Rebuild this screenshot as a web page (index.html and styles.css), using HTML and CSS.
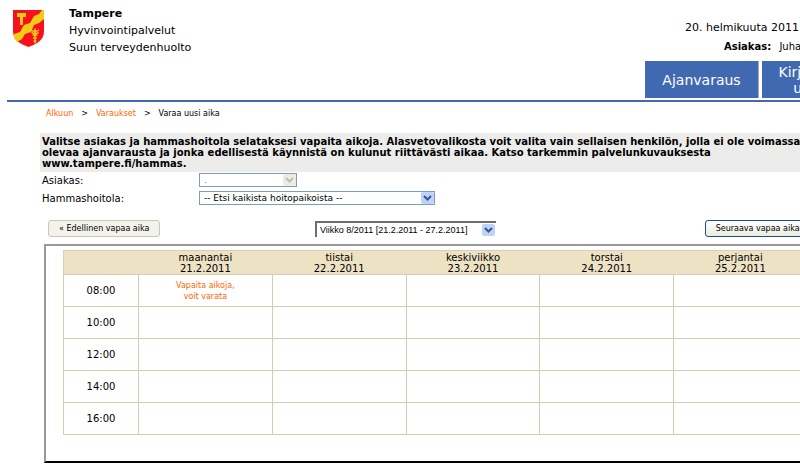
FILE: index.html
```html
<!DOCTYPE html>
<html lang="fi">
<head>
  <meta charset="UTF-8">
  <title>Ajanvaraus - Suun terveydenhuolto</title>
  <link rel="stylesheet" href="styles.css">
</head>
<body>

  <div class="page">
    <header class="header">
      <svg class="logo" viewBox="0 0 31 37" aria-hidden="true">
        <path d="M0 0h31v21c0 9-7 13-15.500 16C7 34 0 30 0 21z" fill="#f8101c"/>
        <path d="M31 0v9l-5 4-5 2-3 7-6 2-3 5-5 3-3-4v-4l6-2 4-7 6-2 4-7 5-2 3-4z" fill="#f0cc18"/>
        <path d="M4 3h9v4h-3v8H7V7H4z" fill="#f0cc18"/>
        <path d="M22 18.500v15M18 20q4 3 8 0M18.500 22.500q3.500 2 7 0M19.500 25h5M20 28h4M20.500 31h3" fill="none" stroke="#f0cc18" stroke-width="1.500"/>
      </svg>
      <div class="org">
        <h1>Tampere</h1>
        <p>Hyvinvointipalvelut</p>
        <p>Suun terveydenhuolto</p>
      </div>
      <div class="session">
        <div class="user">
          <p>20. helmikuuta 2011</p>
          <p class="client"><b>Asiakas:</b> Juha</p>
        </div>
        <nav class="tabs">
          <a href="#">Ajanvaraus</a>
          <a href="#">Kirjaudu<br>ulos</a>
        </nav>
      </div>
    </header>

    <main class="content">
      <nav class="breadcrumb">
        <a href="#">Alkuun</a>
        <span>&gt;</span>
        <a href="#">Varaukset</a>
        <span>&gt;</span>
        <span>Varaa uusi aika</span>
      </nav>

      <p class="info">Valitse asiakas ja hammashoitola selataksesi vapaita aikoja. Alasvetovalikosta voit valita vain sellaisen henkilön, jolla ei ole voimassa olevaa ajanvarausta ja jonka edellisestä käynnistä on kulunut riittävästi aikaa. Katso tarkemmin palvelunkuvauksesta www.tampere.fi/hammas.</p>

      <div class="form">
        <label for="client">Asiakas:</label>
        <div class="select client-select">
          <select id="client" disabled><option>.</option></select>
          <svg class="arrow" viewBox="0 0 13 11" aria-hidden="true"><path d="M3 3.500l3.500 3.500L10 3.500"/></svg>
        </div>
        <label for="clinic">Hammashoitola:</label>
        <div class="select clinic-select">
          <select id="clinic"><option>-- Etsi kaikista hoitopaikoista --</option></select>
          <svg class="arrow" viewBox="0 0 13 11" aria-hidden="true"><path d="M3 3.500l3.500 3.500L10 3.500"/></svg>
        </div>
      </div>

      <div class="pager">
        <button type="button">« Edellinen vapaa aika</button>
        <div class="select week-select">
          <select aria-label="Viikko"><option>Viikko 8/2011 [21.2.2011 - 27.2.2011]</option></select>
          <svg class="arrow" viewBox="0 0 13 11" aria-hidden="true"><path d="M3 3.500l3.500 3.500L10 3.500"/></svg>
        </div>
        <button type="button" class="next">Seuraava vapaa aika »</button>
      </div>

      <div class="calendar">
        <table>
          <thead>
            <tr>
              <th class="time"></th>
              <th>maanantai<br>21.2.2011</th>
              <th>tiistai<br>22.2.2011</th>
              <th>keskiviikko<br>23.2.2011</th>
              <th>torstai<br>24.2.2011</th>
              <th>perjantai<br>25.2.2011</th>
            </tr>
          </thead>
          <tbody>
            <tr><th>08:00</th><td><a href="#">Vapaita aikoja,<br>voit varata</a></td><td></td><td></td><td></td><td></td></tr>
            <tr><th>10:00</th><td></td><td></td><td></td><td></td><td></td></tr>
            <tr><th>12:00</th><td></td><td></td><td></td><td></td><td></td></tr>
            <tr><th>14:00</th><td></td><td></td><td></td><td></td><td></td></tr>
            <tr><th>16:00</th><td></td><td></td><td></td><td></td><td></td></tr>
          </tbody>
        </table>
      </div>
    </main>
  </div>

</body>
</html>
```

FILE: styles.css
```css
* {
  box-sizing: border-box;
  margin: 0;
  padding: 0;
}

body {
  background: #fff;
  color: #000;
  font-family: Verdana, "DejaVu Sans", sans-serif;
  font-size: 10px;
  overflow: hidden;
}

a {
  color: #f60;
  text-decoration: none;
}

.page {
  min-width: 862px;
  padding-left: 7px;
}

/* Header */
.header {
  display: flex;
  align-items: flex-start;
  padding: 5px 8px 2px 6px;
  border-bottom: 2px solid #4169b2;
}

.logo {
  width: 31px;
  height: 37px;
  margin-top: 5px;
}

.org {
  margin-left: 25px;
  font-size: 11px;
  line-height: 17px;
}

.org h1 {
  font-size: 11px;
}

.session {
  margin-left: auto;
}

.user {
  width: 155px;
  margin-left: 40px;
  padding-top: 13px;
  font-size: 11px;
  line-height: 19px;
}

.client {
  margin-left: 39px;
  font-size: 10px;
}

.client b {
  margin-right: 5px;
}

.tabs {
  display: grid;
  grid-template-columns: 114px 92px;
  gap: 3px;
  margin-top: 5px;
}

.tabs a {
  display: flex;
  align-items: center;
  justify-content: center;
  height: 37px;
  border-right: 1px solid #aaa;
  background: #4169b2;
  color: #fff;
  font-size: 14px;
  line-height: 16px;
  text-align: center;
}

/* Content */
.content {
  padding: 7px 34px 0 33px;
}

.breadcrumb {
  display: flex;
  gap: 8px;
  padding-left: 6px;
  font-size: 8px;
  line-height: 10px;
}

.info {
  margin-top: 14px;
  padding: 3px 2px;
  background: #ececea;
  font-weight: bold;
  line-height: 11px;
}

.form {
  display: grid;
  grid-template-columns: 155px auto;
  justify-content: start;
  align-items: center;
  gap: 4px 2px;
  padding: 1px 0 0 2px;
}

/* Drop-downs */
.select {
  position: relative;
}

.select select {
  display: block;
  width: 100%;
  height: 14px;
  padding-left: 4px;
  border: 1px solid #7f9db9;
  border-radius: 0;
  background: #fff;
  color: #000;
  font: 9px Verdana, "DejaVu Sans", sans-serif;
  appearance: none;
}

.select .arrow {
  position: absolute;
  top: 1px;
  right: 1px;
  width: 13px;
  height: 12px;
  border-radius: 2px;
  background: #bfd2fb;
  fill: none;
  stroke: #3c5488;
  stroke-width: 2;
  pointer-events: none;
}

.client-select {
  width: 98px;
}

.client-select select {
  color: #777;
  opacity: 1;
}

.client-select .arrow {
  background: #ecebe4;
  stroke: #c0beb0;
}

.clinic-select {
  width: 236px;
}

.week-select {
  width: 181px;
}

.week-select select {
  height: 16px;
  padding-left: 3px;
  border: 0 solid #716f64;
  border-width: 2px 0 0 2px;
  font: 9px "Liberation Sans", Arial, sans-serif;
}

.week-select .arrow {
  top: 3px;
}

/* Week browsing */
.pager {
  display: grid;
  grid-template-columns: 267px 1fr auto;
  justify-items: start;
  align-items: center;
  margin-top: 15px;
  padding: 0 10px 0 8px;
}

.pager button {
  height: 17px;
  padding: 0 10px;
  border: 1px solid #c9c7ba;
  border-radius: 3px;
  background: #f4f3ea;
  color: #000;
  font: 8px Verdana, "DejaVu Sans", sans-serif;
}

.pager .next {
  border-color: #1f5185;
  background: linear-gradient(#fff, #ecebe0);
}

/* Calendar */
.calendar {
  margin: 7px 0 0 4px;
  padding: 4px 18px 26px 17px;
  border: 2px solid #999;
  border-bottom-color: #000;
}

.calendar table {
  width: 100%;
  border-collapse: collapse;
  table-layout: fixed;
}

.calendar th {
  font-weight: normal;
}

.calendar thead th {
  height: 24px;
  background: #eee2c4;
  line-height: 11px;
}

.calendar thead tr {
  border: 1px solid #d8cfb4;
}

.calendar .time {
  width: 75px;
}

.calendar tbody th,
.calendar td {
  height: 32px;
  border: 1px solid #d5ccb2;
  text-align: center;
}

.calendar td a {
  display: block;
  font-size: 8px;
  line-height: 11px;
}
```
